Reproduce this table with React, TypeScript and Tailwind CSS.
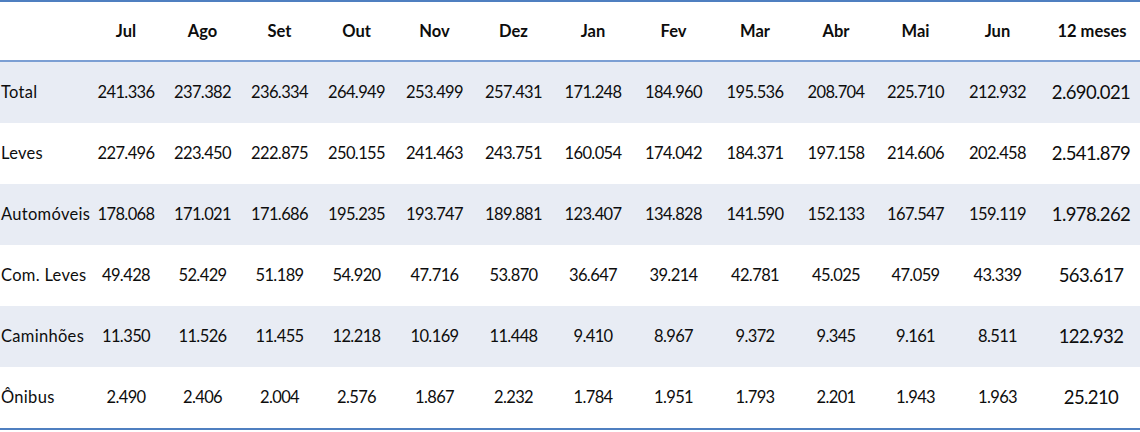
const months = ['Jul', 'Ago', 'Set', 'Out', 'Nov', 'Dez', 'Jan', 'Fev', 'Mar', 'Abr', 'Mai', 'Jun'];

interface Row {
  label: string;
  values: string[];
  total: string;
}

const rows: Row[] = [
  {
    label: 'Total',
    values: ['241.336', '237.382', '236.334', '264.949', '253.499', '257.431', '171.248', '184.960', '195.536', '208.704', '225.710', '212.932'],
    total: '2.690.021',
  },
  {
    label: 'Leves',
    values: ['227.496', '223.450', '222.875', '250.155', '241.463', '243.751', '160.054', '174.042', '184.371', '197.158', '214.606', '202.458'],
    total: '2.541.879',
  },
  {
    label: 'Automóveis',
    values: ['178.068', '171.021', '171.686', '195.235', '193.747', '189.881', '123.407', '134.828', '141.590', '152.133', '167.547', '159.119'],
    total: '1.978.262',
  },
  {
    label: 'Com. Leves',
    values: ['49.428', '52.429', '51.189', '54.920', '47.716', '53.870', '36.647', '39.214', '42.781', '45.025', '47.059', '43.339'],
    total: '563.617',
  },
  {
    label: 'Caminhões',
    values: ['11.350', '11.526', '11.455', '12.218', '10.169', '11.448', '9.410', '8.967', '9.372', '9.345', '9.161', '8.511'],
    total: '122.932',
  },
  {
    label: 'Ônibus',
    values: ['2.490', '2.406', '2.004', '2.576', '1.867', '2.232', '1.784', '1.951', '1.793', '2.201', '1.943', '1.963'],
    total: '25.210',
  },
];

// colunas medidas no print
const cols =
  'grid grid-cols-[88px_76px_77px_77px_77px_79px_79px_80px_81px_82px_80px_79px_85px_100px]';

export default function App() {
  return (
    <div className="w-[1140px] h-[432px] bg-white text-[#0d0d0d] font-['Lato','Liberation_Sans',sans-serif]">
      <div className="border-t-2 border-b-2 border-[#4f7fc0]">
        {/* Cabeçalho */}
        <div className={`${cols} h-[60px] items-center border-b-2 border-[#7c9fd3] text-[16.5px] font-bold`}>
          <div />
          {months.map((m) => (
            <div key={m} className="text-center">
              {m}
            </div>
          ))}
          <div className="text-center pl-1">12 meses</div>
        </div>

        {/* Linhas */}
        {rows.map((row, i) => (
          <div
            key={row.label}
            className={`${cols} h-[61px] items-center text-[16.5px] ${i % 2 === 0 ? 'bg-[#e8ecf4]' : 'bg-white'}`}
          >
            <div className="pl-px whitespace-nowrap tracking-[0.3px]">{row.label}</div>
            {row.values.map((v, j) => (
              <div key={j} className="text-center tracking-[-0.6px]">
                {v}
              </div>
            ))}
            <div className="text-center text-[18.5px] tracking-[-0.6px] pl-0.5">{row.total}</div>
          </div>
        ))}
      </div>
    </div>
  );
}
